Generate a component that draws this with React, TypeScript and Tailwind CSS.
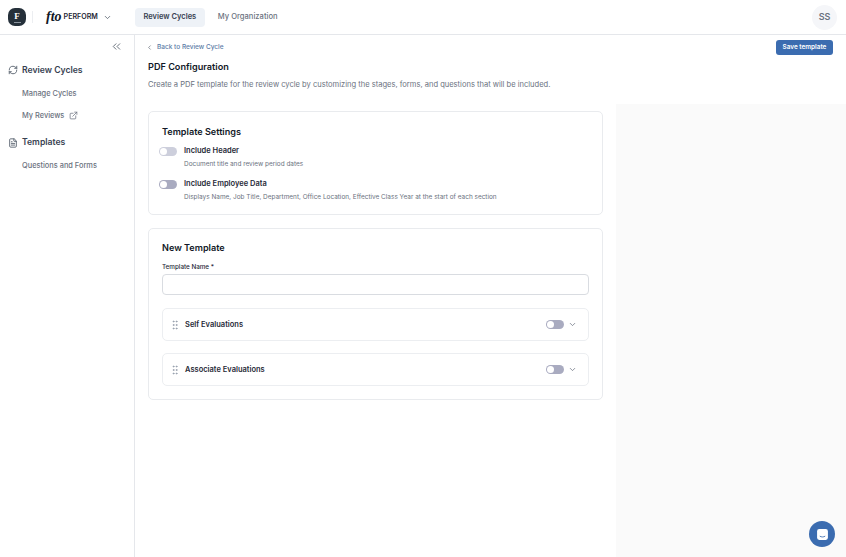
import { ChevronDown, ChevronLeft, ChevronsLeft, RefreshCw, FileText, ExternalLink, GripVertical } from "lucide-react";

function Toggle({ dark = false }: { dark?: boolean }) {
  return (
    <div className={`flex h-[9px] w-[18px] shrink-0 items-center rounded-full ${dark ? "bg-[#a9abc0]" : "bg-[#cdcfdc]"}`}>
      <div className="ml-px h-[7px] w-[7px] rounded-full bg-white" />
    </div>
  );
}

function EvalRow({ label }: { label: string }) {
  return (
    <div className="flex h-[33px] items-center rounded-[5px] border border-[#eceef1] pl-[6px] pr-[11px]">
      <GripVertical className="h-[12px] w-[12px] text-[#8b94a3]" strokeWidth={1.5} />
      <span className="ml-[4px] flex-1 text-[7.5px] font-semibold text-[#1f2937]">{label}</span>
      <Toggle dark />
      <ChevronDown className="ml-[4px] h-[9px] w-[9px] text-[#6b7280]" />
    </div>
  );
}

export default function App() {
  return (
    <div className="flex h-[557px] w-[846px] flex-col overflow-hidden bg-white font-['Inter',sans-serif]">
      <header className="flex h-[35px] shrink-0 items-center border-b border-[#e5e7eb] pl-[8px] pr-[9px]">
        <div className="flex h-[18px] w-[18px] flex-col items-center justify-center rounded-[7px] bg-[#25303a] font-['Liberation_Serif',serif] text-[9px] font-bold leading-[9px] text-white">
          F
          <div className="mt-[1px] h-px w-[7px] bg-[#8b949e]" />
        </div>
        <div className="ml-[6px] h-[12px] w-px bg-[#eceef1]" />
        <div className="ml-[13px] flex items-center">
          <span className="font-['Liberation_Serif',serif] text-[14px] font-bold italic leading-none text-[#111827]">fto</span>
          <span className="ml-[2px] text-[7.1px] font-semibold text-[#1f2937]">PERFORM</span>
          <ChevronDown className="ml-[5px] h-[9px] w-[9px] text-[#4b5563]" />
        </div>
        <nav className="ml-[23px] flex items-center gap-[3px]">
          <div className="flex h-[19px] w-[70px] items-center justify-center rounded-[4px] bg-[#eef2f7] text-[7.5px] font-semibold text-[#374151]">Review Cycles</div>
          <div className="flex h-[19px] items-center px-[10px] text-[7.6px] font-medium text-[#6b7280]">My Organization</div>
        </nav>
        <div className="ml-auto flex h-[25px] w-[25px] items-center justify-center rounded-full bg-[#f5f6f9] text-[9px] font-semibold text-[#6b7280]">SS</div>
      </header>
      <div className="flex min-h-0 flex-1">
        <aside className="w-[135px] shrink-0 border-r border-[#e5e7eb]">
          <div className="flex justify-end pr-[11px] pt-[5px]">
            <ChevronsLeft className="h-[13px] w-[13px] text-[#4b5563]" strokeWidth={1.5} />
          </div>
          <div className="mt-[11px] flex items-center pl-[8px]">
            <RefreshCw className="h-[10px] w-[10px] text-[#4b5563]" />
            <span className="ml-[4px] text-[8.65px] font-semibold text-[#374151]">Review Cycles</span>
          </div>
          <div className="mt-[11px] pl-[22px] text-[7.4px] font-medium text-[#6b7280]">Manage Cycles</div>
          <div className="mt-[11px] flex items-center pl-[22px] text-[7.4px] font-medium text-[#6b7280]">
            My Reviews
            <ExternalLink className="ml-[5px] h-[9px] w-[9px]" />
          </div>
          <div className="mt-[15px] flex items-center pl-[8px]">
            <FileText className="h-[10px] w-[10px] text-[#4b5563]" />
            <span className="ml-[4px] text-[8.65px] font-semibold text-[#374151]">Templates</span>
          </div>
          <div className="mt-[11px] pl-[22px] text-[7.4px] font-medium text-[#6b7280]">Questions and Forms</div>
        </aside>
        <main className="flex min-w-0 flex-1 flex-col">
          <div className="h-[69px] shrink-0 pl-[11px] pr-[13px]">
            <div className="flex items-center justify-between pt-[5px]">
              <div className="flex items-center">
                <ChevronLeft className="h-[7px] w-[7px] text-[#4b5563]" />
                <span className="ml-[4px] text-[6.5px] font-medium text-[#5b7ba6]">Back to Review Cycle</span>
              </div>
              <div className="flex h-[15px] w-[57px] items-center justify-center rounded-[3px] bg-[#3b6cb0] text-[6.4px] font-semibold text-white">Save template</div>
            </div>
            <div className="mt-[5px] pl-[2px] text-[9.15px] font-semibold text-[#111827]">PDF Configuration</div>
            <div className="mt-[5px] pl-[2px] text-[7.56px] text-[#6b7280]">Create a PDF template for the review cycle by customizing the stages, forms, and questions that will be included.</div>
          </div>
          <div className="flex min-h-0 flex-1">
            <div className="w-[481px] shrink-0 pl-[13px] pr-[13px] pt-[7px]">
              <section className="h-[104px] rounded-[5px] border border-[#e9ebee] px-[13px] pt-[13px]">
                <h2 className="text-[9.1px] font-semibold text-[#111827]">Template Settings</h2>
                <div className="mt-[6px] flex">
                  <div className="ml-[-3px] mt-[2px]"><Toggle /></div>
                  <div className="ml-[7px]">
                    <div className="text-[7.5px] font-semibold text-[#1f2937]">Include Header</div>
                    <div className="mt-[4px] text-[6.45px] text-[#6b7280]">Document title and review period dates</div>
                  </div>
                </div>
                <div className="mt-[8px] flex">
                  <div className="ml-[-3px] mt-[2px]"><Toggle dark /></div>
                  <div className="ml-[7px]">
                    <div className="text-[7.5px] font-semibold text-[#1f2937]">Include Employee Data</div>
                    <div className="mt-[4px] text-[6.45px] text-[#6b7280]">Displays Name, Job Title, Department, Office Location, Effective Class Year at the start of each section</div>
                  </div>
                </div>
              </section>
              <section className="mt-[13px] h-[172px] rounded-[5px] border border-[#e9ebee] px-[13px] pt-[12px]">
                <h2 className="text-[9.1px] font-semibold text-[#111827]">New Template</h2>
                <div className="mt-[8px] text-[6.3px] font-medium text-[#1f2937]">Template Name *</div>
                <div className="mt-[2px] h-[21px] rounded-[4px] border border-[#d9dce1]" />
                <div className="mt-[13px]"><EvalRow label="Self Evaluations" /></div>
                <div className="mt-[12px]"><EvalRow label="Associate Evaluations" /></div>
              </section>
            </div>
            <div className="flex-1 bg-[#fafafa]" />
          </div>
        </main>
      </div>
      <div className="absolute left-[809px] top-[521px] flex h-[26px] w-[26px] items-center justify-center rounded-full bg-[#3b6cb0]">
        <svg viewBox="0 0 12 12" className="h-[13px] w-[13px]">
          <rect x="1" y="1" width="10" height="10" rx="2" fill="#fff" />
          <path d="M3.5 7.5c1.5 1 3.5 1 5 0" stroke="#3b6cb0" strokeWidth="0.8" fill="none" />
        </svg>
      </div>
    </div>
  );
}
